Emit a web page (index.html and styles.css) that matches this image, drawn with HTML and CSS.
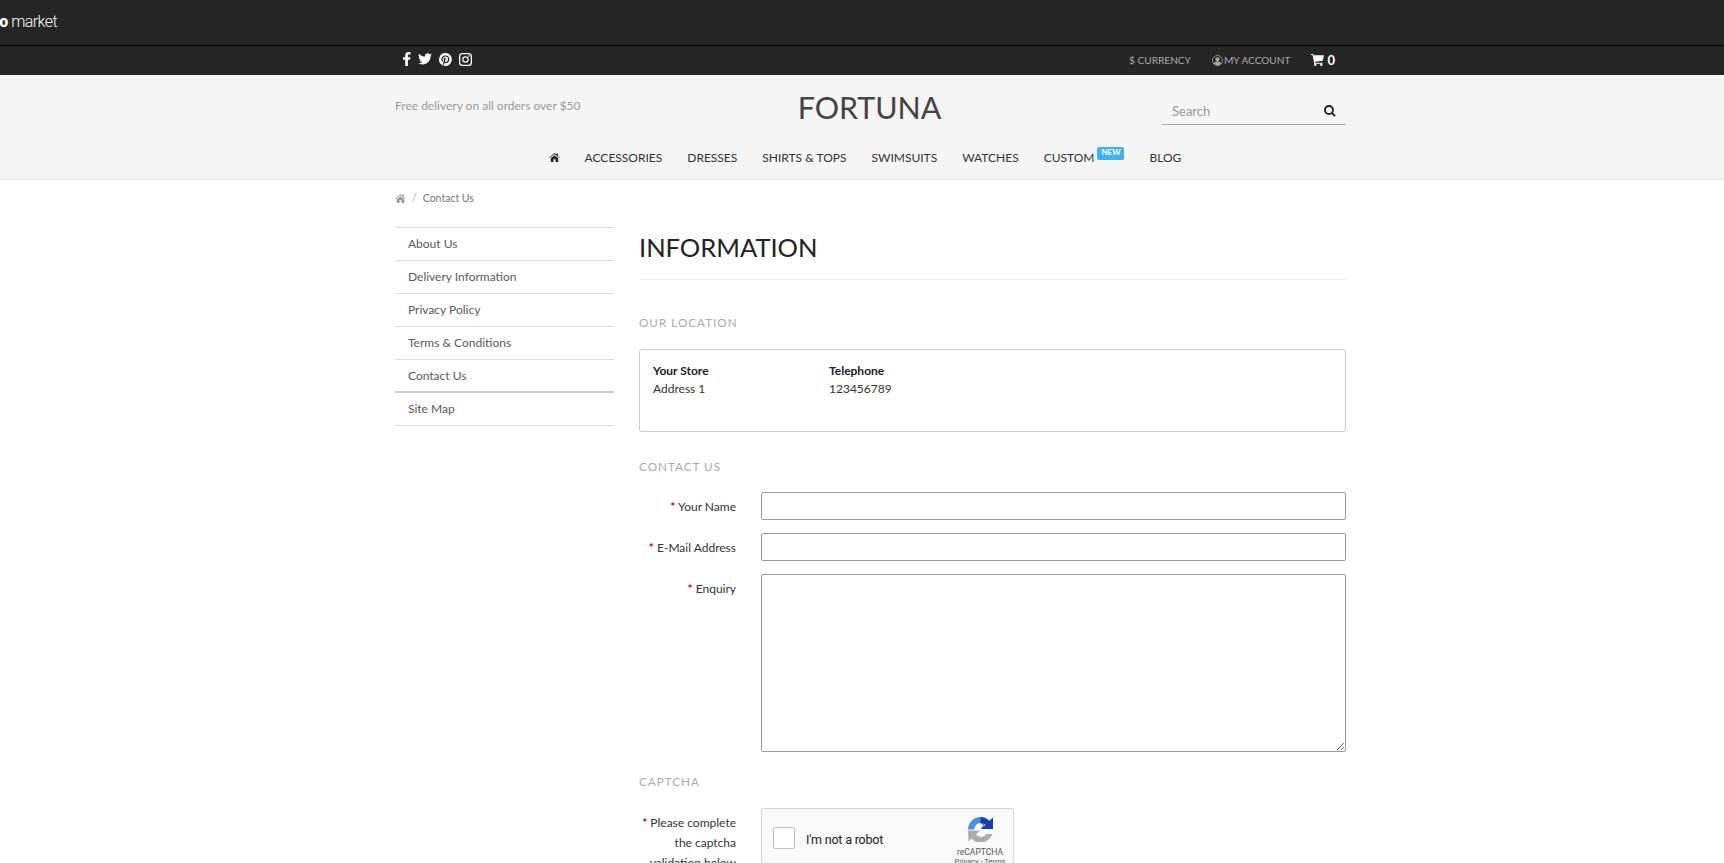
FILE: index.html
```html
<!DOCTYPE html>
<html>
	<head>
		<meta charset="utf-8">
		<title>Contact Us</title>
		<link rel="stylesheet" href="styles.css">
	</head>
	<body>
		<div class="demo-bar">
			<a class="demo-logo" href="#"><b>to</b><span>market</span></a>
		</div>

		<div class="top-bar">
			<div class="container top-inner">
				<div class="social">
					<svg class="ico" width="9" height="14" viewBox="0 0 9 14"><path d="M5.900 14V7.700h2.100l.4-2.500H5.900V3.700c0-.7.2-1.200 1.200-1.200h1.400V.2C8.200.1 7.400 0 6.500 0 4.600 0 3.200 1.200 3.200 3.400v1.800H1v2.500h2.200V14z"/></svg>
					<svg class="ico" width="14" height="12" viewBox="0 0 14 12"><path d="M14 1.600c-.5.2-1 .4-1.600.4.600-.3 1-.9 1.200-1.500-.5.300-1.100.5-1.800.7C11.300.6 10.600.2 9.700.2 8.200.2 6.900 1.500 6.900 3c0 .2 0 .4.100.6C4.600 3.500 2.500 2.400 1 .7.800 1.100.600 1.600.600 2.100c0 1 .5 1.800 1.300 2.300-.5 0-.9-.1-1.300-.3 0 1.400 1 2.500 2.300 2.800-.5.100-.8.100-1.300 0 .3 1.100 1.400 1.900 2.600 2C3.100 9.800 1.600 10.300 0 10.100c1.300.8 2.800 1.300 4.400 1.300 5.300 0 8.200-4.400 8.200-8.200v-.4c.5-.4 1-.9 1.400-1.500z"/></svg>
					<svg class="ico" width="13" height="13" viewBox="0 0 13 13"><path fill-rule="evenodd" d="M6.500 0a6.500 6.500 0 0 0-2.400 12.500c-.1-.5-.1-1.300 0-1.900l.8-3.200s-.2-.4-.2-1c0-.9.500-1.600 1.200-1.600.6 0 .8.400.8.900 0 .6-.4 1.400-.6 2.200-.1.600.3 1.200 1 1.200 1.200 0 2-1.500 2-3.300 0-1.300-.9-2.300-2.500-2.300-1.900 0-3 1.400-3 2.900 0 .5.200 1.100.4 1.400.1.100.1.100.1.200l-.2.600c0 .1-.1.200-.3.100-.8-.4-1.300-1.500-1.300-2.400 0-2 1.400-3.800 4.200-3.800 2.200 0 3.900 1.600 3.900 3.700 0 2.200-1.400 4-3.300 4-.7 0-1.300-.3-1.500-.7l-.4 1.600c-.1.500-.5 1.200-.8 1.600A6.500 6.500 0 1 0 6.500 0z"/></svg>
					<svg class="ico" width="13" height="13" viewBox="0 0 13 13"><path fill-rule="evenodd" d="M3.500 0h6A3.500 3.500 0 0 1 13 3.500v6A3.500 3.500 0 0 1 9.500 13h-6A3.500 3.500 0 0 1 0 9.500v-6A3.500 3.500 0 0 1 3.500 0zm0 1.300A2.200 2.200 0 0 0 1.300 3.500v6a2.200 2.200 0 0 0 2.200 2.200h6a2.200 2.200 0 0 0 2.200-2.200v-6a2.200 2.200 0 0 0-2.200-2.200zM6.500 3.200a3.300 3.300 0 1 1 0 6.600 3.300 3.300 0 0 1 0-6.600zm0 1.200a2.100 2.100 0 1 0 0 4.200 2.100 2.100 0 0 0 0-4.200zM10 2.200a.8.800 0 1 1 0 1.600.8.800 0 0 1 0-1.600z"/></svg>
				</div>
				<div class="top-links">
					<a href="#">$ CURRENCY</a>
					<a class="account" href="#">
						<svg class="ico-user" width="11" height="11" viewBox="0 0 11 11"><circle cx="5.500" cy="5.500" r="5" fill="none" stroke="#aaa" stroke-width=".8"/><circle cx="5.500" cy="4.300" r="2.100"/><path d="M1.800 8.400C2.600 7 3.700 6.600 5.500 6.600s2.900.4 3.700 1.800C8.200 9.600 7 10.200 5.500 10.200S2.800 9.600 1.800 8.400z"/></svg>
						MY ACCOUNT
					</a>
					<a class="cart" href="#">
						<svg class="ico" width="13" height="12" viewBox="0 0 13 12"><path d="M0 0h2.300l.4 1.300H13l-1.300 5.500-7.700.9.200 1H11.500v1.100H3.300L1.600 1.100H0z"/><circle cx="4.300" cy="10.800" r="1.200"/><circle cx="10.300" cy="10.800" r="1.200"/></svg>
						<b>0</b>
					</a>
				</div>
			</div>
		</div>

		<header class="header">
			<div class="container head-row">
				<p class="free">Free delivery on all orders over $50</p>
				<h1 class="brand">FORTUNA</h1>
				<div class="search">
					<span>Search</span>
					<svg width="12" height="12" viewBox="0 0 12 12"><path fill="none" stroke="#1c1c1c" stroke-width="1.800" d="M5 1a4 4 0 1 1 0 8 4 4 0 0 1 0-8zM7.900 7.900l3.200 3.200"/></svg>
				</div>
			</div>
			<nav class="nav">
				<a href="#"><svg class="ico-home" width="11" height="9" viewBox="0 0 13 11"><path d="M6.500 0L0 5.500l.6.700L6.500 1.300l5.900 4.900.6-.7-2.300-1.900V.7H9.100v1.200zM2 6.400V11h3.200V7.700h2.600V11H11V6.400L6.500 2.700z"/></svg></a>
				<a href="#">ACCESSORIES</a>
				<a href="#">DRESSES</a>
				<a href="#">SHIRTS &amp; TOPS</a>
				<a href="#">SWIMSUITS</a>
				<a href="#">WATCHES</a>
				<a class="has-badge" href="#">CUSTOM<span class="badge">NEW</span></a>
				<a href="#">BLOG</a>
			</nav>
		</header>

		<div class="container">
			<div class="crumbs">
				<svg class="ico-crumb" width="11" height="9" viewBox="0 0 13 11"><path d="M6.500 0L0 5.500l.6.700L6.500 1.300l5.900 4.900.6-.7-2.300-1.900V.7H9.100v1.200zM2 6.400V11h3.200V7.700h2.600V11H11V6.400L6.500 2.700z"/></svg>
				<span class="sep">/</span>
				<a href="#">Contact Us</a>
			</div>

			<div class="page">
				<aside class="side">
					<a href="#">About Us</a>
					<a href="#">Delivery Information</a>
					<a href="#">Privacy Policy</a>
					<a href="#">Terms &amp; Conditions</a>
					<a class="current" href="#">Contact Us</a>
					<a href="#">Site Map</a>
				</aside>

				<main class="main">
					<h2 class="title">INFORMATION</h2>

					<h3 class="legend first">OUR LOCATION</h3>
					<div class="store">
						<div>
							<b>Your Store</b>
							<p>Address 1</p>
						</div>
						<div>
							<b>Telephone</b>
							<p>123456789</p>
						</div>
					</div>

					<h3 class="legend">CONTACT US</h3>
					<form class="form">
						<label><i>*</i> Your Name</label>
						<input type="text">
						<label><i>*</i> E-Mail Address</label>
						<input type="text">
						<label><i>*</i> Enquiry</label>
						<textarea></textarea>
					</form>

					<h3 class="legend tight">CAPTCHA</h3>
					<div class="form captcha-row">
						<label><i>*</i> Please complete the captcha validation below</label>
						<div class="captcha">
							<span class="check"></span>
							<span class="robot">I'm not a robot</span>
							<div class="rc">
								<svg width="25" height="25" viewBox="0 0 25 25">
									<path fill="#4a90e2" d="M12.500 0A12.500 12.500 0 0 0 0 12.500H6.200A6.500 6.500 0 0 1 12.500 6L15 8.500 12.500 12H18z"/>
									<path fill="#1c3aa9" d="M12.500 0A12.500 12.500 0 0 1 21.500 3.800L25 .5V12H13.500L17.500 8A7 7 0 0 0 12.500 6z"/>
									<path fill="#ababab" d="M0 13.500H12L8 17.500A6.500 6.500 0 0 0 18.500 17H24.500A12.500 12.500 0 0 1 3.500 21.500L.5 24.500z"/>
								</svg>
								<span class="rc-name">reCAPTCHA</span>
								<span class="rc-links">Privacy - Terms</span>
							</div>
						</div>
					</div>
				</main>
			</div>
		</div>
	</body>
</html>
```
FILE: styles.css
```css
*{
	margin: 0;
	padding: 0;
	box-sizing: border-box;
}

html, body{
	height: 863px;
	overflow: hidden;
}

body{
	font-family: "Lato", "Open Sans", sans-serif;
	font-size: 12px;
	color: #333;
	background: #fff;
}

a{
	color: inherit;
	text-decoration: none;
}

.container{
	width: 951px;
	margin-left: 395px;
}

/******************** bars ********************/
.demo-bar{
	height: 46px;
	background: #262626;
	border-bottom: 1px solid #000;
	padding-top: 12px;
}

.demo-logo{
	display: flex;
	align-items: baseline;
	gap: 3px;
	margin-left: -6px;
	color: #fff;
	font-family: "Roboto", sans-serif;
	font-size: 16px;
	line-height: 20px;
}

.demo-logo b{
	font-weight: 900;
}

.demo-logo span{
	font-weight: 300;
	letter-spacing: -0.6px;
}

.top-bar{
	height: 29px;
	background: #262626;
	color: #aaa;
}

.top-inner{
	display: flex;
	justify-content: space-between;
	align-items: center;
	height: 28px;
	padding-right: 11px;
}

.social{
	display: flex;
	align-items: center;
	gap: 7px;
	margin-left: 7px;
	margin-bottom: 2px;
}

.ico{
	fill: #fff;
	display: block;
}

.top-links{
	display: flex;
	align-items: center;
	gap: 21px;
	font-size: 10.100px;
}

.top-links a{
	display: flex;
	align-items: center;
	gap: 3px;
}

.top-links .account{
	gap: 1px;
}

.ico-user{
	fill: #aaa;
}

.top-links .cart{
	color: #fff;
	font-size: 13px;
	gap: 3px;
}

/******************** header ********************/
.header{
	height: 105px;
	background: #f5f5f5;
	border-bottom: 1px solid #ebebeb;
}

.head-row{
	display: grid;
	grid-template-columns: 1fr 1fr 1fr;
	height: 65px;
}

.free{
	padding-top: 23px;
	color: #999;
	font-size: 12px;
	line-height: 16px;
}

.brand{
	font-size: 30.400px;
	font-weight: 400;
	color: #444;
	text-align: center;
	line-height: 40px;
	padding-top: 12px;
	padding-right: 2px;
}

.search{
	justify-self: end;
	align-self: start;
	display: flex;
	justify-content: space-between;
	align-items: center;
	width: 184px;
	height: 27px;
	margin-top: 23px;
	padding: 0 10px;
	border-bottom: 1px solid #aaa;
	color: #999;
	font-size: 13px;
}

.nav{
	display: flex;
	justify-content: center;
	align-items: center;
	gap: 25px;
	height: 34px;
	padding-left: 6px;
	font-size: 12px;
	color: #333;
}

.ico-home{
	display: block;
	fill: #222;
}

.has-badge{
	position: relative;
	margin-right: 30px;
}

.badge{
	position: absolute;
	left: 100%;
	margin-left: 3px;
	top: -3px;
	width: 27px;
	height: 13px;
	background: #3fb1f5;
	border-radius: 2px;
	color: #fff;
	font-size: 8px;
	font-weight: 700;
	line-height: 11px;
	text-align: center;
}

/******************** breadcrumb ********************/
.crumbs{
	display: flex;
	align-items: center;
	gap: 6px;
	height: 36px;
	margin-bottom: 11px;
	color: #777;
	font-size: 10.500px;
}

.ico-crumb{
	fill: #999;
}

.sep{
	color: #aaa;
}

/******************** columns ********************/
.page{
	display: flex;
	gap: 25px;
}

.side{
	flex: 0 0 219px;
	border-top: 1px solid #ddd;
	align-self: flex-start;
}

.side a{
	display: block;
	height: 33px;
	padding-left: 13px;
	line-height: 32px;
	border-bottom: 1px solid #ddd;
	color: #5a5a5a;
}

.side .current{
	border-bottom: 2px solid #ccc;
}

.main{
	flex: 1;
}

.title{
	height: 53px;
	font-size: 25.500px;
	font-weight: 400;
	color: #222;
	line-height: 40px;
	border-bottom: 1px solid #eee;
}

.legend{
	margin: 25px 0 17px;
	font-size: 11.700px;
	font-weight: 400;
	letter-spacing: 1px;
	color: #aaa;
	line-height: 18px;
}

.legend.first{
	margin-top: 33px;
	margin-bottom: 18px;
}

.legend.tight{
	margin-top: 20px;
	margin-bottom: 18px;
}

.store{
	display: grid;
	grid-template-columns: 176px 1fr;
	height: 83px;
	padding: 12px 13px;
	border: 1px solid #ccc;
	border-radius: 3px;
	line-height: 18px;
}

.store b{
	color: #222;
}

.form{
	display: grid;
	grid-template-columns: 97px 585px;
	column-gap: 25px;
	row-gap: 13px;
	justify-content: end;
}

.form label{
	text-align: right;
	line-height: 28px;
	padding-top: 1px;
	height: 28px;
	color: #333;
}

.form i{
	color: #c00;
	font-style: normal;
	font-weight: 700;
}

.form input, .form textarea{
	display: block;
	height: 28px;
	border: 1px solid #999;
	border-radius: 2px;
	background: #fff;
}

.form textarea{
	height: 178px;
}

/******************** captcha ********************/
.captcha-row label{
	height: auto;
	line-height: 20px;
	padding-top: 5px;
}

.captcha{
	display: flex;
	align-items: flex-start;
	width: 253px;
	height: 80px;
	padding: 18px 0 0 11px;
	background: #f9f9f9;
	border: 1px solid #d3d3d3;
	border-radius: 2px;
	font-family: "Roboto", sans-serif;
	position: relative;
}

.check{
	width: 22px;
	height: 22px;
	background: #fff;
	border: 1px solid #c1c1c1;
	border-radius: 2px;
}

.robot{
	margin-left: 11px;
	margin-top: 2px;
	font-size: 12.500px;
	letter-spacing: -0.2px;
	line-height: 22px;
	color: #222;
}

.rc{
	position: absolute;
	right: 9px;
	top: 8px;
	width: 48px;
	display: flex;
	flex-direction: column;
	align-items: center;
	color: #555;
	font-size: 8.500px;
	line-height: 10px;
	white-space: nowrap;
}

.rc svg{
	margin-bottom: 5px;
}

.rc-links{
	font-size: 7.500px;
}
```
